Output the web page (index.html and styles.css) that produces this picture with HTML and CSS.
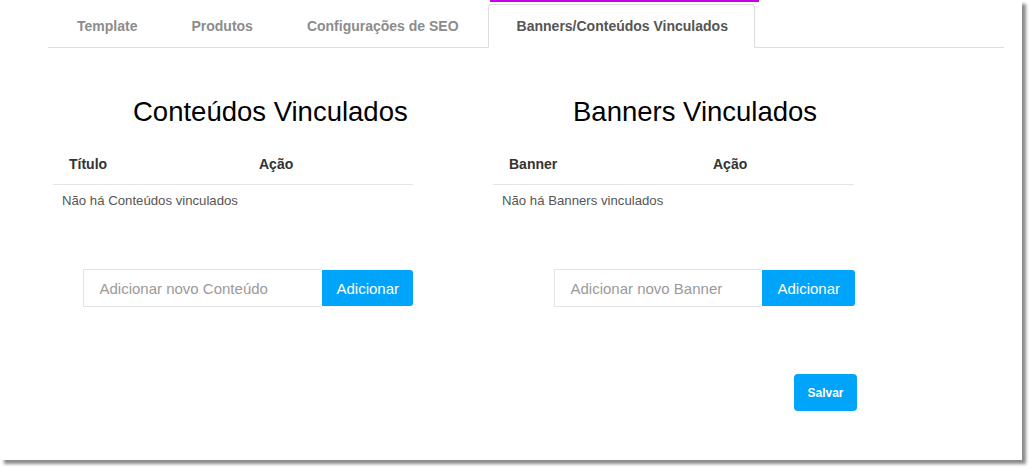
FILE: index.html
```html
<!DOCTYPE html>
<html lang="pt-BR">
<head>
<meta charset="utf-8">
<title>Banners/Conteúdos Vinculados</title>
<link rel="stylesheet" href="styles.css">
</head>
<body>
<div class="panel">
  <nav class="tabs">
    <a class="tab">Template</a>
    <a class="tab">Produtos</a>
    <a class="tab">Configurações de SEO</a>
    <a class="tab active">Banners/Conteúdos Vinculados</a>
  </nav>
  <div class="content">
    <div class="columns">
      <section class="col">
        <h2 class="col-title">Conteúdos Vinculados</h2>
        <table class="list">
          <thead>
            <tr><th class="th-first th-first--conteudo">Título</th><th>Ação</th></tr>
          </thead>
          <tbody>
            <tr><td colspan="2">Não há Conteúdos vinculados</td></tr>
          </tbody>
        </table>
        <div class="add-group">
          <input class="add-input add-input--conteudo" type="text" placeholder="Adicionar novo Conteúdo">
          <button class="add-btn" type="button">Adicionar</button>
        </div>
      </section>
      <section class="col">
        <h2 class="col-title">Banners Vinculados</h2>
        <table class="list">
          <thead>
            <tr><th class="th-first th-first--banner">Banner</th><th>Ação</th></tr>
          </thead>
          <tbody>
            <tr><td colspan="2">Não há Banners vinculados</td></tr>
          </tbody>
        </table>
        <div class="add-group add-group--banner">
          <input class="add-input add-input--banner" type="text" placeholder="Adicionar novo Banner">
          <button class="add-btn" type="button">Adicionar</button>
        </div>
      </section>
    </div>
    <div class="actions">
      <button class="btn-save" type="button">Salvar</button>
    </div>
  </div>
</div>
</body>
</html>
```
FILE: styles.css
```css
html, body {
  margin: 0;
  padding: 0;
  background: #fff;
}

body {
  min-height: 468px;
  font-family: "Liberation Sans", Arial, sans-serif;
  color: #333;
}

.panel {
  width: 1022px;
  height: 460px;
  background: #fff;
  box-shadow: 4px 4px 3px rgba(0, 0, 0, 0.45);
}

/* Tabs */
.tabs {
  display: flex;
  align-items: flex-start;
  box-sizing: border-box;
  width: 956px;
  height: 48px;
  margin-left: 48px;
  padding: 4px 0 0 3px;
  border-bottom: 1px solid #dddddd;
}

.tab {
  display: block;
  box-sizing: border-box;
  height: 44px;
  margin: 0 2px -1px 0;
  padding: 0 25px;
  border: 1px solid transparent;
  border-radius: 4px 4px 0 0;
  line-height: 42px;
  font-size: 14px;
  font-weight: bold;
  color: #8c8c8c;
  white-space: nowrap;
  cursor: pointer;
}

.tab.active {
  position: relative;
  margin-left: 1px;
  padding: 0 26px 0 28px;
  color: #555;
  background: #fff;
  border-color: #dddddd;
  border-bottom-color: #fff;
}

.tab.active::before {
  content: "";
  position: absolute;
  top: -5px;
  left: 1px;
  right: -5px;
  height: 2px;
  background: #c800e8;
}

/* Content */
.content {
  padding-left: 53px;
}

.columns {
  display: grid;
  grid-template-columns: 360px 361px;
  column-gap: 80px;
}

.col-title {
  margin: 49px 0 0 80px;
  font-size: 27.5px;
  line-height: 30px;
  font-weight: normal;
  color: #000;
  white-space: nowrap;
}

.list {
  width: 100%;
  margin-top: 19px;
  border-collapse: collapse;
}

.list th {
  padding: 8px 0 10px 16px;
  line-height: 20px;
  font-size: 14px;
  font-weight: bold;
  color: #333;
  text-align: left;
  border-bottom: 1px solid #e5e5e5;
}

.th-first--conteudo {
  width: 174px;
}

.th-first--banner {
  width: 188px;
}

.list td {
  padding: 6px 9px 8px;
  line-height: 20px;
  font-size: 13.2px;
  color: #555;
}

.add-group {
  display: flex;
  justify-content: flex-end;
  align-items: flex-start;
  margin-top: 50px;
}

.add-group--banner {
  margin-right: -1px;
}

.add-input {
  box-sizing: border-box;
  height: 38px;
  margin: 0;
  padding: 0 15px;
  border: 1px solid #e3e3e3;
  border-right: 0;
  font-family: "Liberation Sans", Arial, sans-serif;
  font-size: 15px;
  color: #555;
  outline: none;
}

.add-input::placeholder {
  color: #9a9a9a;
}

.add-input--conteudo {
  width: 239px;
}

.add-input--banner {
  width: 208px;
}

.add-btn {
  box-sizing: border-box;
  height: 36px;
  margin: 1px 0 0 0;
  padding: 0 14px;
  border: 0;
  border-radius: 0 3px 3px 0;
  background: #00a4fb;
  color: #fff;
  font-family: "Liberation Sans", Arial, sans-serif;
  font-size: 15px;
  cursor: pointer;
}

.add-group--banner .add-btn {
  padding: 0 15px;
}

.actions {
  display: flex;
  justify-content: flex-end;
  width: 804px;
  margin-top: 67px;
}

.btn-save {
  width: 63px;
  height: 37px;
  padding: 0;
  border: 0;
  border-radius: 4px;
  background: #00a4fb;
  color: #fff;
  font-family: "Liberation Sans", Arial, sans-serif;
  font-size: 12px;
  font-weight: bold;
  cursor: pointer;
}
```
